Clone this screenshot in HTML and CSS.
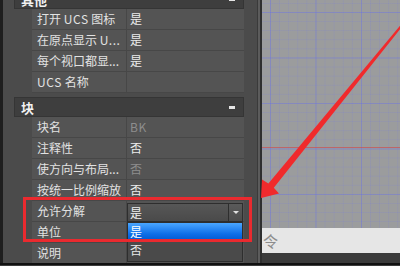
FILE: index.html
```html
<!DOCTYPE html>
<html>
<head>
<meta charset="utf-8">
<link rel="stylesheet" href="styles.css">
</head>
<body>
<div class="app">
  <div class="main">
    <div class="edge"></div>
    <div class="panel">
      <div class="section first">
        <div class="sec-head">其他<span class="minus"></span></div>
        <div class="prop"><div class="pn">打开 <span class="lat">UCS</span> 图标</div><div class="pv">是</div></div>
        <div class="prop"><div class="pn">在原点显示 <span class="lat">U...</span></div><div class="pv">是</div></div>
        <div class="prop"><div class="pn">每个视口都显...</div><div class="pv">是</div></div>
        <div class="prop"><div class="pn"><span class="lat">UCS</span> 名称</div><div class="pv"></div></div>
      </div>
      <div class="section">
        <div class="sec-head">块<span class="minus"></span></div>
        <div class="prop"><div class="pn">块名</div><div class="pv dim"><span class="lat">BK</span></div></div>
        <div class="prop"><div class="pn">注释性</div><div class="pv">否</div></div>
        <div class="prop"><div class="pn">使方向与布局...</div><div class="pv dim">否</div></div>
        <div class="prop"><div class="pn">按统一比例缩放</div><div class="pv">否</div></div>
        <div class="prop"><div class="pn">允许分解</div>
          <div class="pv combo-cell">
            <div class="combo">
              <div class="cval">是</div>
              <div class="carrow"><span class="tri"></span></div>
              <div class="list">
                <div class="opt sel">是</div>
                <div class="opt">否</div>
              </div>
            </div>
          </div>
        </div>
        <div class="prop"><div class="pn">单位</div><div class="pv"></div></div>
        <div class="prop"><div class="pn">说明</div><div class="pv"></div></div>
      </div>
    </div>
    <div class="splitter"></div>
    <div class="viewport">
      <div class="canvas"></div>
      <div class="cmd">令</div>
      <div class="status"></div>
    </div>
  </div>
  <div class="bottom-line"></div>
  <div class="bottom-rest"></div>
</div>
<div class="highlight"></div>
<svg class="arrow" width="400" height="266" viewBox="0 0 400 266">
  <polygon points="261,198 279,193.4 273.8,187.8 404,24.2 402.4,23 268.4,183.4 262,179.4" fill="#f02a2c"/>
</svg>
</body>
</html>
```

FILE: styles.css
```css
* { box-sizing: border-box; }
html, body {
  margin: 0;
  padding: 0;
}
body {
  width: 400px;
  height: 266px;
  overflow: hidden;
  position: relative;
  background: #3a3a3a;
  font-family: "Noto Sans CJK SC", "Noto Sans", sans-serif;
  font-size: 12px;
  color: #e2e2e2;
}
.lat {
  letter-spacing: 0.6px;
}
.app {
  display: flex;
  flex-direction: column;
  height: 266px;
}
.main {
  display: flex;
  height: 263px;
  overflow: hidden;
}
.bottom-line {
  height: 2px;
  background: #111;
}
.bottom-rest {
  height: 1px;
  background: #3c3c3c;
}
.edge {
  width: 3px;
  background: #1e1e1e;
}
.panel {
  width: 254px;
  padding-left: 11px;
  padding-right: 13px;
  background: #4b4b4b;
  display: flex;
  flex-direction: column;
  overflow: hidden;
}
.section.first {
  margin-top: -11px;
}
.section + .section {
  margin-top: 4px;
}
.sec-head {
  height: 20px;
  display: flex;
  align-items: center;
  justify-content: space-between;
  padding: 0 8px 0 6px;
  background: #3e3e3e;
  border: 1px solid #353535;
  font-size: 13px;
  font-weight: bold;
  color: #f2f2f2;
}
.minus {
  width: 6px;
  height: 3px;
  background: #e6e6e6;
}
.prop {
  display: flex;
  height: 21px;
  margin-left: 18px;
  background: #545454;
  border-bottom: 1px solid #474747;
  line-height: 20px;
  white-space: nowrap;
}
.pn {
  width: 95px;
  padding-left: 5px;
  border-right: 1px solid #474747;
  overflow: hidden;
}
.pv {
  flex: 1;
  padding-left: 3px;
  color: #ececec;
}
.pv.dim {
  color: #8d8d8d;
}
.combo-cell {
  padding-left: 0;
}
.combo {
  position: relative;
  margin-top: 2px;
  width: 116px;
  height: 19px;
  display: flex;
  border: 1px solid #2e2e2e;
  background: linear-gradient(#575757, #4a4a4a);
  line-height: 17px;
}
.cval {
  flex: 1;
  padding-left: 2px;
  color: #f0f0f0;
}
.carrow {
  width: 14px;
  border-left: 1px solid #2e2e2e;
  background: linear-gradient(#5a5a5a, #4c4c4c);
  display: flex;
  align-items: center;
  justify-content: center;
}
.tri {
  width: 0;
  height: 0;
  border-left: 3px solid transparent;
  border-right: 3px solid transparent;
  border-top: 3px solid #e0e0e0;
}
.list {
  position: absolute;
  top: 18px;
  left: -1px;
  width: 116px;
  height: 40px;
  border: 1px solid #2e2e2e;
  background: #4a4a4a;
  z-index: 2;
}
.opt {
  height: 18px;
  line-height: 18px;
  padding-left: 2px;
  color: #e8e8e8;
}
.opt.sel {
  background: linear-gradient(#4aa6ff, #0f6fe8 60%, #0057d0);
  color: #fff;
}
.splitter {
  width: 5px;
  border-left: 1px solid #3a3a3a;
  background: #5c5c5c;
  border-right: 2px solid #2f2f2f;
}
.viewport {
  flex: 1;
  display: flex;
  flex-direction: column;
}
.canvas {
  height: 228px;
  background:
    linear-gradient(to bottom, transparent 147px, rgba(200, 85, 85, 0.75) 147px, rgba(200, 85, 85, 0.75) 148px, transparent 148px) 0 0 / 100% 100% no-repeat,
    linear-gradient(to right, rgba(110, 118, 220, 0.42) 1px, transparent 1px) 8px 12px / 45.5px 45.5px,
    linear-gradient(to bottom, rgba(110, 118, 220, 0.42) 1px, transparent 1px) 8px 12px / 45.5px 45.5px,
    linear-gradient(to right, rgba(120, 125, 220, 0.18) 1px, transparent 1px) 8px 12px / 9.1px 9.1px,
    linear-gradient(to bottom, rgba(120, 125, 220, 0.18) 1px, transparent 1px) 8px 12px / 9.1px 9.1px,
    #9b9c9d;
}
.cmd {
  height: 25px;
  background: #e6e6e6;
  color: #8c8c8c;
  font-size: 15px;
  line-height: 25px;
  padding-left: 1px;
}
.status {
  flex: 1;
  background: #3b3b3b;
}
.highlight {
  position: absolute;
  left: 23px;
  top: 197px;
  width: 229px;
  height: 45px;
  border: 3px solid #ea2a2f;
  z-index: 5;
}
.arrow {
  position: absolute;
  left: 0;
  top: 0;
  z-index: 6;
}
```
